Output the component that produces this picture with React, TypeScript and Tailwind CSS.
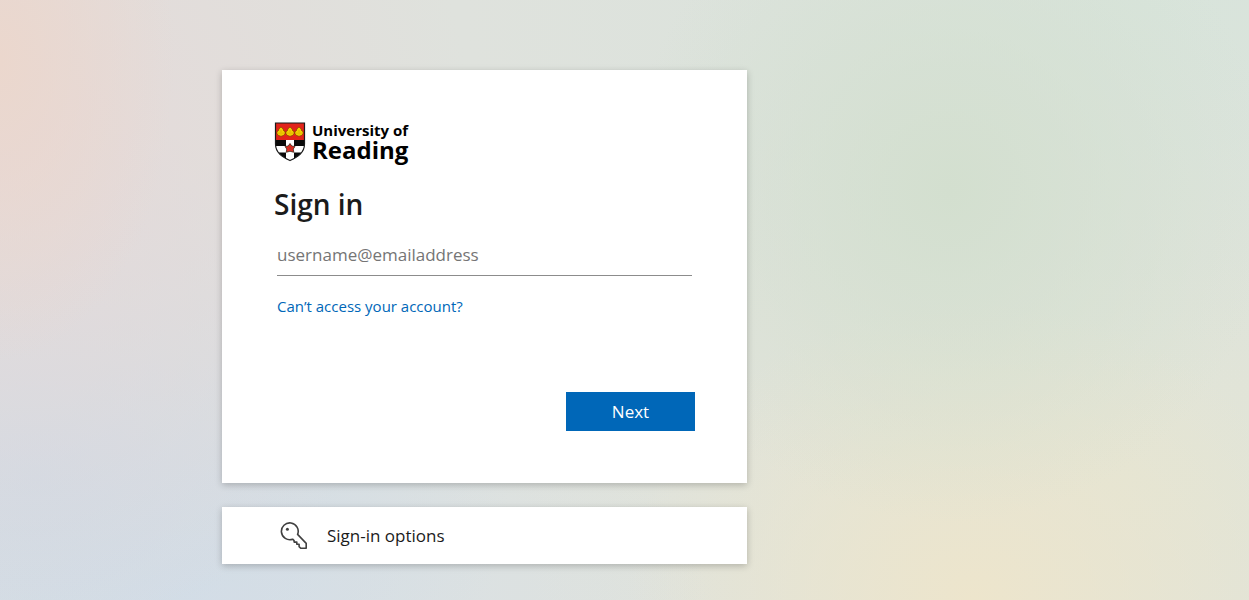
import { useState } from "react";

function Shield() {
  return (
    <svg viewBox="0 0 62 80" className="h-10 w-8 shrink-0" aria-hidden="true">
      <defs>
        <clipPath id="shield">
          <path d="M2 2H60V44C60 62 46 70 31 77C16 70 2 62 2 44Z" />
        </clipPath>
      </defs>
      <g clipPath="url(#shield)">
        <rect width="62" height="80" fill="#fff" />
        <rect width="62" height="36" fill="#e2231a" />
        <path d="M0 36H23V48H0ZM39 36H62V48H39Z" fill="#0a0a0a" />
        <path d="M0 61H23V80H0ZM39 61H62V80H39Z" fill="#0a0a0a" />
      </g>
      {[13, 31, 49].map((x) => (
        <g key={x} transform={`translate(${x} 20)`}>
          <path
            d="M0 -10C2 -8 5 -7 5 -3C9 -2 9 3 7 5C5 8 2 7 0 9C-2 7 -5 8 -7 5C-9 3 -9 -2 -5 -3C-5 -7 -2 -8 0 -10Z"
            fill="#f4cf00"
            stroke="#7a3a00"
            strokeWidth="1.4"
          />
          <path d="M0 -4V5M-4 1V4M4 1V4" stroke="#c79a00" strokeWidth="1" />
        </g>
      ))}
      <path
        d="M31 43L34.5 48L41 49L37.5 54L38.5 60.5L31 58.5L23.5 60.5L24.5 54L21 49L27.5 48Z"
        fill="#dc2a22"
        stroke="#3b2a1a"
        strokeWidth="1.6"
      />
      <circle cx="31" cy="52.5" r="2" fill="#a8432a" />
      <path
        d="M2 2H60V44C60 62 46 70 31 77C16 70 2 62 2 44Z"
        fill="none"
        stroke="#1a1a1a"
        strokeWidth="2.4"
      />
    </svg>
  );
}

function KeyIcon() {
  return (
    <svg
      viewBox="0 0 28 28"
      className="size-7 shrink-0"
      fill="none"
      stroke="#404040"
      strokeWidth="1.6"
      strokeLinejoin="round"
      aria-hidden="true"
    >
      <path d="M17.6 12.4A8.4 8.4 0 1 0 12.6 17.2L14.1 18.6V20.1H16.8V22.2H19.1V24.6L20.7 26.2H26.2V21.4Z" />
      <circle cx="7.4" cy="7.2" r="1.5" fill="#404040" stroke="none" />
    </svg>
  );
}

export default function App() {
  const [username, setUsername] = useState("");

  return (
    <main className="min-h-screen bg-[#dfe2dd] bg-[radial-gradient(ellipse_14%_50%_at_0%_10%,#ebd7cd,#ebd7cd00),radial-gradient(ellipse_36%_80%_at_2%_25%,#e5d9d9,#e5d9d900),radial-gradient(ellipse_38%_60%_at_3%_80%,#cfdae5,#cfdae500),radial-gradient(ellipse_42%_40%_at_15%_100%,#d7e0e8,#d7e0e800),radial-gradient(ellipse_26%_55%_at_76%_32%,#d3dfcf,#d3dfcf00),radial-gradient(ellipse_28%_50%_at_78%_100%,#ede5cc,#ede5cc00),radial-gradient(ellipse_55%_65%_at_92%_0%,#d8e4db,#d8e4db00),radial-gradient(ellipse_50%_70%_at_90%_80%,#e2e5d6,#e2e5d600)] px-4 py-[70px] font-['Open_Sans','Segoe_UI',sans-serif] text-[#1b1b1b] md:pb-9 lg:pl-[222px]">
      <div className="flex max-w-[525px] flex-col gap-6">
        <form
          className="bg-white p-[52px] shadow-[0_2px_7px_rgba(0,0,0,0.22)]"
          onSubmit={(e) => e.preventDefault()}
        >
          <div className="flex items-start gap-1.5 text-black">
            <Shield />
            <p className="text-2xl leading-6 font-bold">
              <span className="block text-[15px] leading-4">University of</span>
              Reading
            </p>
          </div>

          <h1 className="mt-6 text-[28px] leading-9 font-semibold">Sign in</h1>

          <div className="mx-[3px] mt-3">
            <input
              type="email"
              aria-label="Username"
              placeholder="username@emailaddress"
              value={username}
              onChange={(e) => setUsername(e.target.value)}
              className="h-[42px] w-full border-b border-[#8c8c8c] text-[17px] outline-none placeholder:text-[#757575] focus:border-[#0067b8]"
            />
            <a href="#recover" className="mt-[18px] inline-block text-[15px] leading-6 text-[#0067b8] hover:underline">
              Can’t access your account?
            </a>
          </div>

          <div className="mt-[74px] flex justify-end">
            <button
              type="submit"
              className="h-[39px] w-[129px] bg-[#0067b8] text-[17px] text-white hover:bg-[#005da6]"
            >
              Next
            </button>
          </div>
        </form>

        <button
          type="button"
          className="flex h-[57px] items-center gap-[19px] bg-white px-[58px] text-left text-[17px] shadow-[0_2px_7px_rgba(0,0,0,0.22)] hover:bg-[#f2f2f2]"
        >
          <KeyIcon />
          Sign-in options
        </button>
      </div>
    </main>
  );
}
